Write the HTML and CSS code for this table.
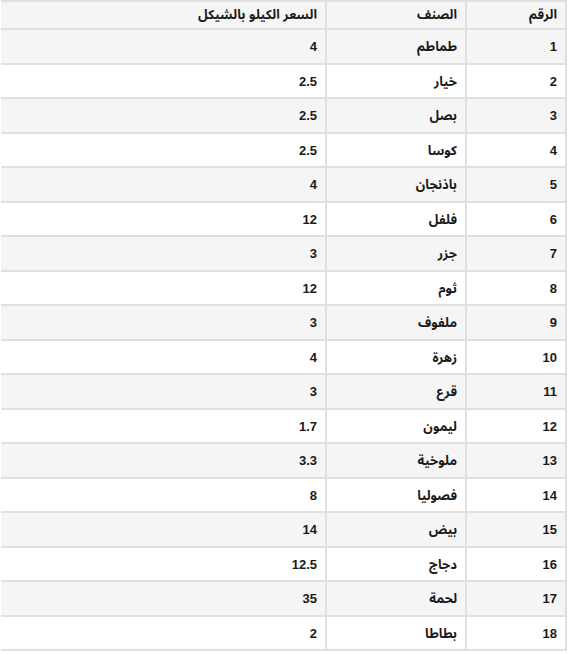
FILE: index.html
```html
<!DOCTYPE html>
<html lang="ar" dir="rtl">
<head>
<meta charset="utf-8">
<link rel="stylesheet" href="styles.css">
</head>
<body>
<table class="prices">
  <thead>
    <tr><th class="c-num">الرقم</th><th class="c-name">الصنف</th><th class="c-price">السعر الكيلو بالشيكل</th></tr>
  </thead>
  <tbody>
    <tr><td>1</td><td>طماطم</td><td>4</td></tr>
    <tr><td>2</td><td>خيار</td><td>2.5</td></tr>
    <tr><td>3</td><td>بصل</td><td>2.5</td></tr>
    <tr><td>4</td><td>كوسا</td><td>2.5</td></tr>
    <tr><td>5</td><td>باذنجان</td><td>4</td></tr>
    <tr><td>6</td><td>فلفل</td><td>12</td></tr>
    <tr><td>7</td><td>جزر</td><td>3</td></tr>
    <tr><td>8</td><td>ثوم</td><td>12</td></tr>
    <tr><td>9</td><td>ملفوف</td><td>3</td></tr>
    <tr><td>10</td><td>زهرة</td><td>4</td></tr>
    <tr><td>11</td><td>قرع</td><td>3</td></tr>
    <tr><td>12</td><td>ليمون</td><td>1.7</td></tr>
    <tr><td>13</td><td>ملوخية</td><td>3.3</td></tr>
    <tr><td>14</td><td>فصوليا</td><td>8</td></tr>
    <tr><td>15</td><td>بيض</td><td>14</td></tr>
    <tr><td>16</td><td>دجاج</td><td>12.5</td></tr>
    <tr><td>17</td><td>لحمة</td><td>35</td></tr>
    <tr><td>18</td><td>بطاطا</td><td>2</td></tr>
  </tbody>
</table>
</body>
</html>
```
FILE: styles.css
```css
html, body {
  margin: 0;
  padding: 0;
  background: #fff;
}
body {
  font-family: "Liberation Sans", "Noto Sans Arabic", "Noto Naskh Arabic", sans-serif;
  font-size: 13px;
  font-weight: bold;
  color: #1a1a1a;
}
.prices {
  border-collapse: collapse;
  width: 566px;
  margin-right: 3px;
  border-top: 2px solid #e0e0e0;
  border-right: 2px solid #e0e0e0;
}
.prices th,
.prices td {
  text-align: right;
  padding: 0 8px;
  border-bottom: 2px solid #e0e0e0;
  border-left: 2px solid #e0e0e0;
  line-height: 16px;
}
.prices td:last-child,
.prices th:last-child { border-left: none; }
.prices th {
  height: 26px;
  background: #f5f5f5;
  font-weight: bold;
}
.prices td {
  box-sizing: border-box;
  height: 34.5px;
  padding-top: 2px;
}
.prices tbody tr:nth-child(odd) td { background: #f5f5f5; }
.c-num { width: 82px; }
.c-name { width: 122px; }
```
